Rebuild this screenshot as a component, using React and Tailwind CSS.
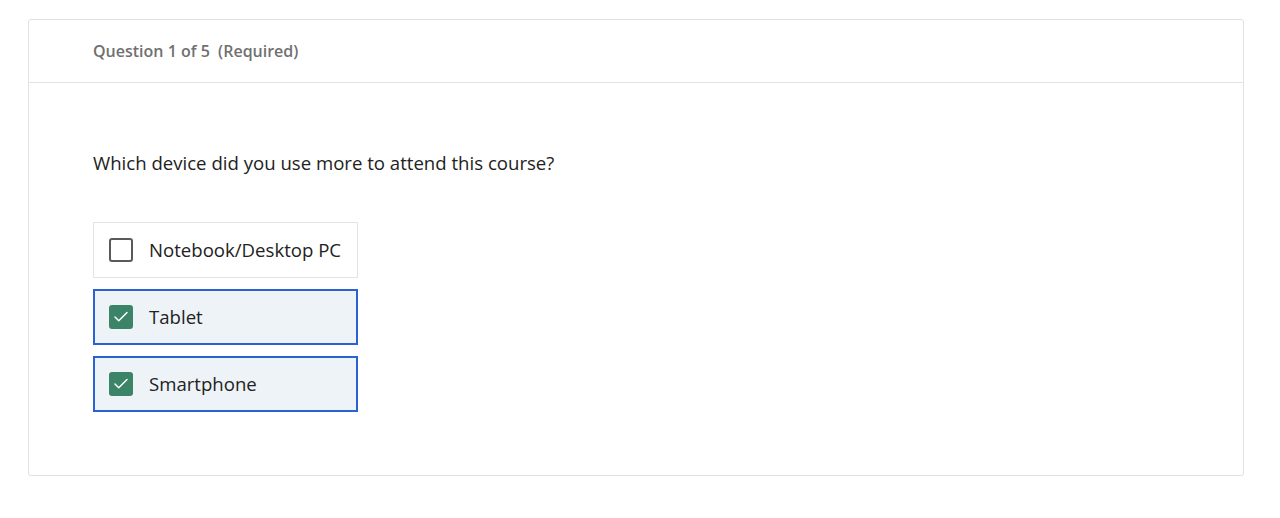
import { Check } from "lucide-react";

const options = [
    { label: "Notebook/Desktop PC", checked: false },
    { label: "Tablet", checked: true },
    { label: "Smartphone", checked: true },
];

const Option = ({ label, checked }) => {
    return <label
        className={
            checked
                ? "flex items-center gap-4 h-[56px] px-[14px] border-2 border-[#2a62d4] bg-[#eef3f7]"
                : "flex items-center gap-4 h-[56px] px-[15px] border border-[#e3e3e3] bg-white"
        }
    >
        {checked ? (
            <span className="flex items-center justify-center shrink-0 w-[24px] h-[24px] rounded-[3px] bg-[#3b8468]">
                <Check className="w-[18px] h-[18px] text-white" strokeWidth={2} />
            </span>
        ) : (
            <span className="shrink-0 w-[24px] h-[24px] rounded-[3px] border-2 border-[#5a5a5a] bg-white" />
        )}
        <span className="text-[18.6px] leading-[26px] text-[#222] whitespace-nowrap">{label}</span>
    </label>;
};

export default function App() {
    return <div className="min-h-screen bg-white pt-[19px] pl-[28px]" style={{ fontFamily: '"Open Sans", sans-serif' }}>
        <div className="w-[1216px] border border-[#e2e2e2] rounded-[3px]">
            <div className="h-[63px] flex items-center pl-[64px] border-b border-[#e2e2e2]">
                <span className="text-[16px] font-semibold text-[#707070] whitespace-pre">Question 1 of 5  (Required)</span>
            </div>
            <div className="pl-[64px] pt-[66px] pb-[63px]">
                <p className="text-[18.6px] leading-[27px] text-[#222]">
                    Which device did you use more to attend this course?
                </p>
                <div className="mt-[46px] flex flex-col gap-[11px] w-[265px]">
                    {options.map((o) => (
                        <Option key={o.label} label={o.label} checked={o.checked} />
                    ))}
                </div>
            </div>
        </div>
    </div>;
}
